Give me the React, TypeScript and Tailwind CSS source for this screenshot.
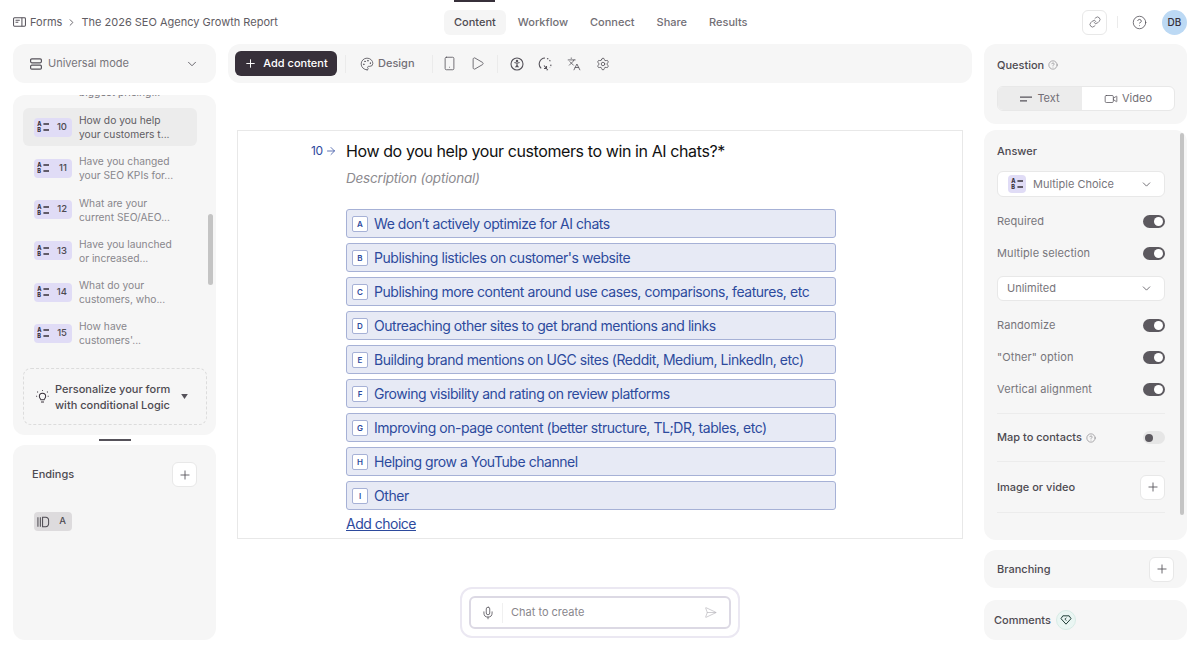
import { ArrowRight, ChevronDown, ChevronRight, CircleHelp, Languages, Link, Mic, Palette, Play, Plus, SendHorizontal, Settings, Smartphone, Video } from "lucide-react";

const tabs = ["Content", "Workflow", "Connect", "Share", "Results"];

const questions = [
  { n: 10, a: "How do you help", b: "your customers t...", active: true },
  { n: 11, a: "Have you changed", b: "your SEO KPIs for..." },
  { n: 12, a: "What are your", b: "current SEO/AEO..." },
  { n: 13, a: "Have you launched", b: "or increased..." },
  { n: 14, a: "What do your", b: "customers, who..." },
  { n: 15, a: "How have", b: "customers'..." },
];

const choices = [
  ["A", "We don’t actively optimize for AI chats"],
  ["B", "Publishing listicles on customer's website"],
  ["C", "Publishing more content around use cases, comparisons, features, etc"],
  ["D", "Outreaching other sites to get brand mentions and links"],
  ["E", "Building brand mentions on UGC sites (Reddit, Medium, LinkedIn, etc)"],
  ["F", "Growing visibility and rating on review platforms"],
  ["G", "Improving on-page content (better structure, TL;DR, tables, etc)"],
  ["H", "Helping grow a YouTube channel"],
  ["I", "Other"],
];

function ChoiceIcon({ className }: { className?: string }) {
  return (
    <svg viewBox="0 0 14 14" className={className} fill="none">
      <text x="0.2" y="6" fontSize="6.5" fontWeight="800" fontFamily="Inter" fill="#37303a">A</text>
      <text x="0.2" y="13" fontSize="6.5" fontWeight="800" fontFamily="Inter" fill="#37303a">B</text>
      <path d="M7.5 3.5h6.5M7.5 10.5h6.5" stroke="#37303a" strokeWidth="1.5" />
    </svg>
  );
}

function Toggle({ on = true }: { on?: boolean }) {
  return on ? (
    <div className="flex h-[13px] w-[22px] items-center justify-end rounded-full bg-[#5c595f] pr-[2px]">
      <div className="h-[9px] w-[9px] rounded-full bg-white" />
    </div>
  ) : (
    <div className="flex h-[13px] w-[22px] items-center rounded-full bg-[#e6e6e6] pl-[2px]">
      <div className="h-[8px] w-[8px] rounded-full bg-[#5c595f]" />
    </div>
  );
}

function PlusButton() {
  return (
    <div className="flex h-[25px] w-[25px] shrink-0 items-center justify-center rounded-md border border-[#e8e8e8] bg-white">
      <Plus size={14} strokeWidth={1.5} className="text-[#55525a]" />
    </div>
  );
}

function Row({ label }: { label: string }) {
  return (
    <div className="flex h-[32px] items-center justify-between">
      <span className="text-[11px] tracking-[0.1px] text-[#77757b]">{label}</span>
      <Toggle />
    </div>
  );
}

function Hint() {
  return <CircleHelp size={10} strokeWidth={1.4} className="text-[#77757b]" />;
}

export default function App() {
  return (
    <div className="flex h-[653px] w-[1200px] flex-col overflow-hidden bg-white font-['Inter',sans-serif] text-[#37303a]">
      {/* top bar */}
      <div className="flex h-[44px] shrink-0 items-center px-[13px]">
        <div className="flex w-[431px] shrink-0 items-center text-[11px] text-[#5f5c63]">
          <svg viewBox="0 0 14 12" className="mr-[4px] h-[12px] w-[13px]" fill="none" stroke="#55525a" strokeWidth="1.1">
            <rect x="0.6" y="1.4" width="12.8" height="9.2" rx="1" />
            <path d="M9.6 1.4v9.2M2.7 4.2h4.6M2.7 6.2h3" />
          </svg>
          <span>Forms</span>
          <ChevronRight size={11} className="mx-[4px]" />
          <span>The 2026 SEO Agency Growth Report</span>
        </div>
        <div className="relative flex items-center gap-[2px] text-[11px] font-medium text-[#726f76]">
          <div className="absolute left-[10px] top-[-10px] h-[2px] w-[41px] bg-[#37303a]" />
          {tabs.map((t, i) => (
            <div key={t} className={i === 0 ? "flex h-[25px] items-center rounded-md bg-[#f5f5f5] px-[10px] text-[#4d4a51]" : "flex h-[25px] items-center px-[10px]"}>{t}</div>
          ))}
        </div>
        <div className="flex flex-1 items-center justify-end">
          <div className="flex h-[25px] w-[25px] items-center justify-center rounded-md border border-[#e8e8e8]">
            <Link size={12} strokeWidth={1.4} className="text-[#55525a]" />
          </div>
          <div className="ml-[10px] mr-[14px] h-[12px] w-px bg-[#ebebeb]" />
          <CircleHelp size={15} strokeWidth={1.3} className="text-[#55525a]" />
          <div className="ml-[15px] flex h-[25px] w-[25px] items-center justify-center rounded-full bg-[#bcd9f4] text-[10px] font-medium text-[#37303a]">DB</div>
        </div>
      </div>

      <div className="grid min-h-0 flex-1 grid-cols-[203px_744px_203px] gap-x-[12px] px-[13px] pb-[13px]">
        {/* left column */}
        <div className="flex min-h-0 flex-col">
          <div className="flex h-[39px] shrink-0 items-center rounded-xl bg-[#f6f6f6] pl-[17px] pr-[17px] text-[11px] text-[#77757b]">
            <svg viewBox="0 0 12 12" className="mr-[6px] h-[12px] w-[12px]" fill="none" stroke="#55525a" strokeWidth="1.2">
              <rect x="0.6" y="0.8" width="10.8" height="4" rx="1.2" />
              <rect x="0.6" y="7.2" width="10.8" height="4" rx="1.2" />
            </svg>
            <span className="flex-1">Universal mode</span>
            <ChevronDown size={14} strokeWidth={1.5} className="text-[#55525a]" />
          </div>
          <div className="relative mt-[12px] h-[340px] shrink-0 overflow-hidden rounded-xl bg-[#f6f6f6]">
            <div className="mb-[11px] mt-[-24px] h-[26px] w-[110px] whitespace-nowrap pl-[66px] text-[10.25px] leading-[14px] text-[#77757b]">
              <div>&nbsp;</div>
              <div>biggest pricing...</div>
            </div>
            <div className="ml-[10px] w-[174px]">
              {questions.map((q) => (
                <div key={q.n} className={q.active ? "mb-[3.3px] flex h-[38px] items-center rounded-md bg-[#ececec] pl-[11px]" : "mb-[3.3px] flex h-[38px] items-center pl-[11px]"}>
                  <div className="flex h-[19px] w-[38px] shrink-0 items-center justify-between rounded bg-[#e0dcf6] pl-[3px] pr-[5px]">
                    <ChoiceIcon className="h-[12px] w-[12px]" />
                    <span className="text-[9.5px] font-medium text-[#4d4a51]">{q.n}</span>
                  </div>
                  <div className={q.active ? "ml-[7px] whitespace-nowrap text-[10.25px] leading-[14px] text-[#5f5c63]" : "ml-[7px] whitespace-nowrap text-[10.25px] leading-[14px] text-[#88868c]"}>
                    <div>{q.a}</div>
                    <div>{q.b}</div>
                  </div>
                </div>
              ))}
            </div>
            <div className="absolute right-[3px] top-[119px] h-[71px] w-[5px] rounded-full bg-[#c4c4c4]" />
            <div className="absolute bottom-[10px] left-[10px] flex h-[57px] w-[184px] items-center rounded-lg border border-dashed border-[#dcdcdc] pl-[12px]">
              <svg viewBox="0 0 14 14" className="mr-[6px] h-[13px] w-[13px] shrink-0" fill="none" stroke="#37303a" strokeWidth="1.1">
                <path d="M5.2 10.4C4.6 9 3.6 8.6 3.6 6.8a3.4 3.4 0 0 1 6.8 0c0 1.8-1 2.2-1.6 3.6zM5.4 12.8h3.2" />
                <path d="M7 .2v1.2M1.4 1.8l.9.9M12.6 1.8l-.9.9M.2 6.8h1.2M12.6 6.8h1.2" strokeDasharray="1 .6" />
              </svg>
              <div className="w-[118px] text-[11px] font-medium leading-[16px] text-[#4d4a51]">Personalize your form with conditional Logic</div>
              <svg viewBox="0 0 8 6" className="ml-[8px] h-[5px] w-[7px]"><path d="M0 0h8L4 6z" fill="#55525a" /></svg>
            </div>
          </div>
          <div className="mx-auto my-[4px] h-[2px] w-[32px] shrink-0 bg-[#55525a]" />
          <div className="min-h-0 flex-1 rounded-xl bg-[#f6f6f6] pl-[19px] pr-[19px] pt-[17px]">
            <div className="flex items-center justify-between text-[11px] font-medium text-[#4d4a51]">
              <span>Endings</span>
              <PlusButton />
            </div>
            <div className="ml-[2px] mt-[25px] flex h-[19px] w-[38px] items-center justify-between rounded bg-[#dddbdd] pl-[3px] pr-[6px]">
              <svg viewBox="0 0 14 12" className="h-[12px] w-[13px]" fill="none" stroke="#4d4a51" strokeWidth="1.1">
                <path d="M1 1v10M3.6 1v10M6 1h3.5a3 3 0 0 1 3 3v4a3 3 0 0 1-3 3H6z" />
              </svg>
              <span className="text-[9.5px] font-medium text-[#4d4a51]">A</span>
            </div>
          </div>
        </div>

        {/* center column */}
        <div className="flex min-h-0 flex-col">
          <div className="flex h-[39px] shrink-0 items-center rounded-xl bg-[#f6f6f6] pl-[7px] text-[11px] text-[#55525a]">
            <div className="flex h-[25px] w-[102px] items-center justify-center gap-[6px] rounded-md bg-[#37303a] font-medium text-white">
              <Plus size={13} strokeWidth={1.8} />
              <span>Add content</span>
            </div>
            <div className="mx-2 h-[18px] w-px bg-[#ebebeb]" />
            <Palette size={14} strokeWidth={1.4} className="ml-[6px] mr-[4px]" />
            <span className="font-medium text-[#726f76]">Design</span>
            <div className="ml-[17px] h-[18px] w-px bg-[#ebebeb]" />
            <Smartphone size={15} strokeWidth={1.3} className="ml-[9px]" />
            <Play size={15} strokeWidth={1.3} className="ml-[13px]" />
            <div className="ml-[12px] h-[18px] w-px bg-[#ebebeb]" />
            <svg viewBox="0 0 14 14" className="ml-[12px] h-[14px] w-[14px]" fill="none" stroke="#55525a" strokeWidth="1.1">
              <circle cx="7" cy="7" r="6" />
              <circle cx="7" cy="4" r=".7" fill="#55525a" />
              <path d="M4.4 5.5 7 6.2l2.6-.7M7 6.2v2M5.6 10.4 7 8.2l1.4 2.2" />
            </svg>
            <svg viewBox="0 0 14 14" className="ml-[14px] h-[14px] w-[14px]" fill="none" stroke="#55525a" strokeWidth="1.1">
              <path d="M3.2 11.4A6 6 0 0 1 7 1" />
              <path d="M9 1.4a6 6 0 0 1 3.8 4.2M13 7.6a6 6 0 0 1-1.2 3M10 12.4a6 6 0 0 1-2 .6" strokeDasharray="1.5 1.5" />
              <path d="M6 8.5 8.5 11.5M8.5 9v2.5H6" />
            </svg>
            <Languages size={14} strokeWidth={1.4} className="ml-[15px]" />
            <Settings size={14} strokeWidth={1.4} className="ml-[15px]" />
          </div>

          <div className="ml-[9px] mt-[47px] h-[409px] w-[726px] shrink-0 border border-[#e8e8e8] pt-[8px]">
            <div className="flex items-center pl-[73px]">
              <div className="flex w-[35px] items-center text-[12px] tracking-[-0.3px] text-[#2d4a9d]">
                <span>10</span>
                <ArrowRight size={12} strokeWidth={1.5} className="ml-[2px]" />
              </div>
              <div className="text-[16px] leading-[24px] tracking-[-0.4px] text-[#111111]">How do you help your customers to win in AI chats?*</div>
            </div>
            <div className="mt-[5px] pl-[108px] text-[13.5px] italic leading-[20px] tracking-[-0.2px] text-[#8d8b90]">Description (optional)</div>
            <div className="ml-[108px] mt-[21px] flex w-[490px] flex-col gap-[5px]">
              {choices.map(([k, t]) => (
                <div key={k} className="flex h-[29px] items-center rounded-[3px] border border-[#a6b1d6] bg-[#e7eaf5] pl-[5px] text-[14px] tracking-[-0.45px] text-[#2d4a9d]">
                  <div className="mr-[6px] flex h-[16px] w-[16px] shrink-0 items-center justify-center rounded-[2px] border border-[#a6b1d6] bg-white text-[8px] font-semibold tracking-normal">{k}</div>
                  <span className="whitespace-nowrap">{t}</span>
                </div>
              ))}
            </div>
            <div className="ml-[108px] mt-[3px] text-[14px] leading-[22px] tracking-[-0.5px] text-[#2d4a9d] underline">Add choice</div>
          </div>

          <div className="mx-auto mt-[48px] flex h-[51px] w-[280px] shrink-0 items-center rounded-xl border-2 border-[#ebe8f2] bg-white px-[7px]">
            <div className="flex h-[33px] w-full items-center rounded-md border-2 border-[#dcd9e4] pl-[10px] pr-[12px] text-[11px] text-[#88868c]">
              <Mic size={14} strokeWidth={1.4} className="mr-[7px] text-[#55525a]" />
              <div className="mr-[8px] h-[20px] w-px bg-[#f0f0f0]" />
              <span className="flex-1">Chat to create</span>
              <SendHorizontal size={13} strokeWidth={1.2} className="text-[#b5b3b9]" />
            </div>
          </div>
        </div>

        {/* right column */}
        <div className="flex min-h-0 flex-col">
          <div className="h-[80px] shrink-0 rounded-xl bg-[#f6f6f6] px-[13px] pt-[13px]">
            <div className="flex items-center gap-[4px] text-[11px] font-medium leading-[16px] text-[#4d4a51]">
              Question <Hint />
            </div>
            <div className="mt-[13px] flex h-[25px] w-[178px] overflow-hidden rounded-md border border-[#e8e8e8] bg-white text-[11px] text-[#726f76]">
              <div className="flex w-[84px] items-center justify-center gap-[5px] bg-[#ececec]">
                <svg viewBox="0 0 12 6" className="h-[6px] w-[12px]" stroke="#55525a" strokeWidth="1.2"><path d="M0 1.2h12M0 4.8h7" /></svg>
                Text
              </div>
              <div className="flex flex-1 items-center justify-center gap-[4px]">
                <Video size={14} strokeWidth={1.3} className="text-[#55525a]" />
                Video
              </div>
            </div>
          </div>

          <div className="relative mt-[6px] h-[410px] shrink-0 rounded-xl bg-[#f6f6f6] pl-[13px] pr-[22px] pt-[14px]">
            <div className="absolute right-[3px] top-[3px] h-[382px] w-[4px] rounded-full bg-[#c4c4c4]" />
            <div className="text-[11px] font-medium leading-[14px] text-[#4d4a51]">Answer</div>
            <div className="mt-[13px] flex h-[26px] items-center rounded-md border border-[#e8e8e8] bg-white pl-[10px] pr-[11px] text-[11px] text-[#77757b]">
              <div className="mr-[7px] flex h-[18px] w-[18px] items-center justify-center rounded bg-[#e0dcf6]">
                <ChoiceIcon className="h-[12px] w-[12px]" />
              </div>
              <span className="flex-1">Multiple Choice</span>
              <ChevronDown size={13} strokeWidth={1.5} className="text-[#55525a]" />
            </div>
            <div className="mt-[8px]">
              <Row label="Required" />
              <Row label="Multiple selection" />
            </div>
            <div className="mt-[7px] flex h-[25px] items-center justify-between rounded-md border border-[#e8e8e8] bg-white pl-[9px] pr-[11px] text-[11px] text-[#77757b]">
              Unlimited
              <ChevronDown size={13} strokeWidth={1.5} className="text-[#55525a]" />
            </div>
            <div className="mt-[8px]">
              <Row label="Randomize" />
              <Row label={'"Other" option'} />
              <Row label="Vertical alignment" />
            </div>
            <div className="mt-[8px] flex h-[49px] items-center justify-between border-y border-[#ececec]">
              <span className="flex items-center gap-[4px] text-[11px] font-medium text-[#4d4a51]">Map to contacts <Hint /></span>
              <Toggle on={false} />
            </div>
            <div className="flex h-[51px] items-center justify-between border-b border-[#ececec]">
              <span className="text-[11px] font-medium text-[#4d4a51]">Image or video</span>
              <PlusButton />
            </div>
          </div>

          <div className="mt-[10px] flex h-[38px] shrink-0 items-center justify-between rounded-xl bg-[#f6f6f6] px-[13px] text-[11px] font-medium text-[#4d4a51]">
            Branching
            <PlusButton />
          </div>

          <div className="mt-[12px] flex h-[40px] shrink-0 items-center rounded-xl bg-[#f6f6f6] pl-[10px] text-[11px] font-medium text-[#4d4a51]">
            Comments
            <div className="ml-[5px] flex h-[20px] w-[20px] items-center justify-center rounded-full border border-[#d8ece6] bg-[#eaf6f3]">
              <svg viewBox="0 0 14 12" className="h-[10px] w-[12px]" fill="none" stroke="#1f3d36" strokeWidth="1.2" strokeLinejoin="round">
                <path d="M3.2 1h7.6L13 4.4 7 11 1 4.4z" />
                <path d="M7.6 3.4 5.6 5l2 1.6" strokeWidth="1" />
              </svg>
            </div>
          </div>
        </div>
      </div>
    </div>
  );
}
